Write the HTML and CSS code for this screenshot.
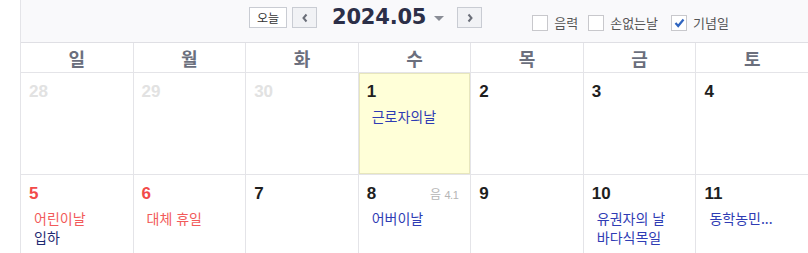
FILE: index.html
```html
<!DOCTYPE html>
<html lang="ko">
<head>
  <meta charset="UTF-8">
  <meta name="viewport" content="width=device-width, initial-scale=1.0">
  <title>달력</title>
  <link rel="stylesheet" href="styles.css">
</head>
<body>
  <div id="calendar">
    <div class="toolbar">
      <div class="nav">
        <div class="btn today">오늘</div>
        <div class="btn arrow">
          <svg width="8" height="10" viewBox="0 0 8 10"><path d="M5.5 1.5 L2.5 5 L5.5 8.5" fill="none" stroke="#6a6e78" stroke-width="2"/></svg>
        </div>
        <div class="title">2024.05</div>
        <div class="caret"></div>
        <div class="btn arrow next">
          <svg width="8" height="10" viewBox="0 0 8 10"><path d="M2.5 1.5 L5.5 5 L2.5 8.5" fill="none" stroke="#6a6e78" stroke-width="2"/></svg>
        </div>
      </div>
      <div class="options">
        <label class="opt"><span class="box"></span>음력</label>
        <label class="opt"><span class="box"></span>손없는날</label>
        <label class="opt checked"><span class="box">
          <svg width="11" height="10" viewBox="0 0 11 10"><path d="M1.5 5 L4.2 8 L9.5 1.5" fill="none" stroke="#2f65c0" stroke-width="2.2"/></svg>
        </span>기념일</label>
      </div>
    </div>

    <div class="weekdays">
      <div>일</div><div>월</div><div>화</div><div>수</div><div>목</div><div>금</div><div>토</div>
    </div>

    <div class="week">
      <div class="day other"><div class="num">28</div></div>
      <div class="day other"><div class="num">29</div></div>
      <div class="day other"><div class="num">30</div></div>
      <div class="day current">
        <div class="num">1</div>
        <div class="events"><div class="ev">근로자의날</div></div>
      </div>
      <div class="day"><div class="num">2</div></div>
      <div class="day"><div class="num">3</div></div>
      <div class="day"><div class="num">4</div></div>
    </div>

    <div class="week">
      <div class="day holiday">
        <div class="num">5</div>
        <div class="events">
          <div class="ev red">어린이날</div>
          <div class="ev dark">입하</div>
        </div>
      </div>
      <div class="day holiday">
        <div class="num">6</div>
        <div class="events"><div class="ev red">대체 휴일</div></div>
      </div>
      <div class="day"><div class="num">7</div></div>
      <div class="day">
        <div class="num">8</div>
        <span class="lunar">음 <em>4.1</em></span>
        <div class="events"><div class="ev">어버이날</div></div>
      </div>
      <div class="day"><div class="num">9</div></div>
      <div class="day">
        <div class="num">10</div>
        <div class="events">
          <div class="ev">유권자의 날</div>
          <div class="ev">바다식목일</div>
        </div>
      </div>
      <div class="day">
        <div class="num">11</div>
        <div class="events"><div class="ev">동학농민...</div></div>
      </div>
    </div>
  </div>
</body>
</html>
```

FILE: styles.css
```css
body {
  margin: 0;
  background-color: #fff;
  font-family: "Noto Sans CJK KR", "Noto Sans", sans-serif;
  color: #222;
}

#calendar {
  margin-left: 20px;
  width: 788px;
  border-left: 1px solid #e4e4e8;
}

.toolbar {
  display: flex;
  align-items: flex-start;
  height: 43px;
  padding-left: 228px;
  background-color: #f9f9fb;
  border-bottom: 1px solid #dfdfe4;
  box-sizing: border-box;
}

.nav {
  display: flex;
  align-items: center;
  margin-top: 7px;
}

.btn {
  display: flex;
  align-items: center;
  justify-content: center;
  height: 21px;
  box-sizing: border-box;
  border: 1px solid #c9ccd3;
  background-color: #fff;
  font-size: 12px;
  color: #333;
  cursor: pointer;
}

.today {
  width: 38px;
}

.arrow {
  width: 25px;
  margin-left: 5px;
  background-color: #f1f2f5;
}

.arrow.next {
  margin-left: 13px;
}

.title {
  margin-left: 15px;
  font-family: "DejaVu Sans", sans-serif;
  font-weight: bold;
  font-size: 21px;
  line-height: 21px;
  color: #2c2f48;
  letter-spacing: -0.2px;
}

.caret {
  width: 0;
  height: 0;
  margin-left: 8px;
  margin-top: 2px;
  border-left: 5px solid transparent;
  border-right: 5px solid transparent;
  border-top: 5px solid #8a8d96;
}

.options {
  display: flex;
  align-items: center;
  margin-left: 50px;
  margin-top: 13px;
}

.opt {
  display: flex;
  align-items: center;
  font-size: 13px;
  color: #555;
  margin-right: 10px;
}

.opt:nth-child(2) {
  margin-right: 13px;
}

.box {
  display: flex;
  align-items: center;
  justify-content: center;
  width: 16px;
  height: 16px;
  margin-right: 6px;
  box-sizing: border-box;
  border: 1px solid #c8c8cc;
  background-color: #fff;
}

.weekdays {
  display: grid;
  grid-template-columns: repeat(7, 1fr);
  border-bottom: 1px solid #e4e4e8;
}

.weekdays div {
  height: 29px;
  line-height: 31px;
  text-align: center;
  font-size: 18px;
  font-weight: bold;
  color: #6b6f7d;
  border-right: 1px solid #e4e4e8;
}

.week {
  display: grid;
  grid-template-columns: repeat(7, 1fr);
  border-bottom: 1px solid #e4e4e8;
}

.day {
  position: relative;
  height: 101px;
  padding: 9px 0 0 8px;
  box-sizing: border-box;
  border-right: 1px solid #e4e4e8;
}

.day.current {
  background-color: #ffffd8;
  box-shadow: inset 0 0 0 1px #e7e6bd;
}

.num {
  font-family: "Liberation Sans", Arial, sans-serif;
  font-weight: bold;
  font-size: 17px;
  line-height: 20px;
  color: #1e1e1e;
}

.other .num {
  color: #e2e2e2;
}

.holiday .num {
  color: #f24a4a;
}

.events {
  margin-top: 5px;
  padding-left: 5px;
}

.ev {
  font-size: 14px;
  line-height: 19px;
  color: #2f3cb4;
  white-space: nowrap;
}

.ev.red {
  color: #f25a5a;
}

.ev.dark {
  color: #1f2a72;
}

.lunar {
  position: absolute;
  top: 10px;
  right: 12px;
  font-size: 12px;
  color: #b5b5b5;
}

.lunar em {
  font-style: normal;
  font-family: "Liberation Sans", Arial, sans-serif;
  font-size: 11px;
  letter-spacing: -0.5px;
}
```
